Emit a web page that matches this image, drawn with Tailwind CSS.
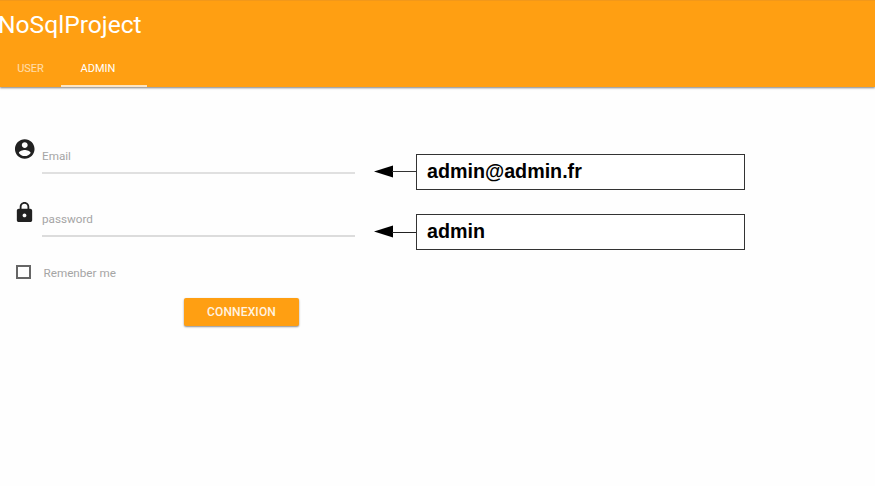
<!DOCTYPE html>
<html lang="fr">
<head>
<meta charset="utf-8">
<title>NoSqlProject</title>
<script src="https://cdn.jsdelivr.net/npm/@tailwindcss/browser@4"></script>
</head>
<body class="h-[486px] overflow-hidden bg-[#fefefe] font-[Roboto,sans-serif]">
<header class="h-[87px] border-t border-[#f2981a] bg-[#ff9f12] text-white shadow-[0_1px_2px_rgba(0,0,0,0.5)]">
  <h1 class="-ml-[2px] h-[47px] pt-[8px] text-[24.6px] leading-8 whitespace-nowrap">NoSqlProject</h1>
  <nav class="flex h-[39px] text-[11px] leading-[41px]">
    <a class="w-[61px] text-center text-white/65">USER</a>
    <a class="w-[86px] border-b-2 border-[#fce5c4] pr-3 text-center">ADMIN</a>
  </nav>
</header>
<main class="flex pt-[50px]">
  <form class="w-[355px] pl-[13px] text-[11.7px] text-[#a5a5a5]">
    <label class="flex h-[37px]">
      <svg class="h-6 w-[23.5px] shrink-0 fill-[#212121]" viewBox="0 0 24 24"><path d="M12 2C6.480 2 2 6.480 2 12s4.480 10 10 10 10-4.480 10-10S17.520 2 12 2zm0 3c1.660 0 3 1.340 3 3s-1.340 3-3 3-3-1.340-3-3 1.340-3 3-3zm0 14.200c-2.500 0-4.710-1.280-6-3.220.030-1.990 4-3.080 6-3.080 1.990 0 5.970 1.090 6 3.080-1.290 1.940-3.500 3.220-6 3.220z"/></svg>
      <span class="ml-[5.5px] flex-1 border-b-2 border-[#e0e0e0] pt-[11px] leading-4">Email</span>
    </label>
    <label class="mt-[26px] flex h-[37px]">
      <svg class="mt-px h-[23px] w-[23px] shrink-0 fill-[#212121]" viewBox="0 0 24 24"><path d="M18 8h-1V6c0-2.760-2.240-5-5-5S7 3.240 7 6v2H6c-1.100 0-2 .9-2 2v10c0 1.100.9 2 2 2h12c1.100 0 2-.9 2-2V10c0-1.100-.9-2-2-2zm-6 9c-1.100 0-2-.9-2-2s.9-2 2-2 2 .9 2 2-.9 2-2 2zm3.100-9H8.900V6c0-1.710 1.390-3.100 3.100-3.100s3.100 1.390 3.100 3.100v2z"/></svg>
      <span class="ml-[6px] flex-1 border-b-2 border-[#dcdcdc] pt-[11px] leading-4">password</span>
    </label>
    <label class="mt-[27px] ml-[3px] flex h-4 items-center">
      <span class="h-[14px] w-[15px] border-2 border-[#666]"></span>
      <span class="ml-[12.500px] pt-[2px] leading-4">Remenber me</span>
    </label>
    <button type="button" class="mt-[18px] ml-[171px] block h-[28px] w-[115px] rounded-[2px] bg-[#ff9f12] text-[12px] font-medium tracking-[0.15px] text-[#fff3e0] shadow-[0_1px_2px_rgba(0,0,0,0.45)]">CONNEXION</button>
  </form>
  <aside class="ml-[19px] pt-[17px] font-['Liberation_Sans',sans-serif] text-[19.7px] font-bold text-black">
    <div class="flex h-[36px]">
      <svg class="h-[36px] w-[42px]" viewBox="0 0 42 36"><path d="M0 17.500L19 11.500v12z"/><path d="M18 17.500h24" stroke="#333" stroke-width="1"/></svg>
      <div class="w-[329px] border border-[#333] bg-white pl-[10px] leading-[32px]">admin@admin.fr</div>
    </div>
    <div class="mt-[24px] flex h-[36px]">
      <svg class="h-[36px] w-[42px]" viewBox="0 0 42 36"><path d="M0 17.500L19 11.500v12z"/><path d="M18 18.500h24" stroke="#222" stroke-width="1"/></svg>
      <div class="w-[329px] border border-[#333] bg-white pl-[10px] leading-[32px]">admin</div>
    </div>
  </aside>
</main>
</body>
</html>
